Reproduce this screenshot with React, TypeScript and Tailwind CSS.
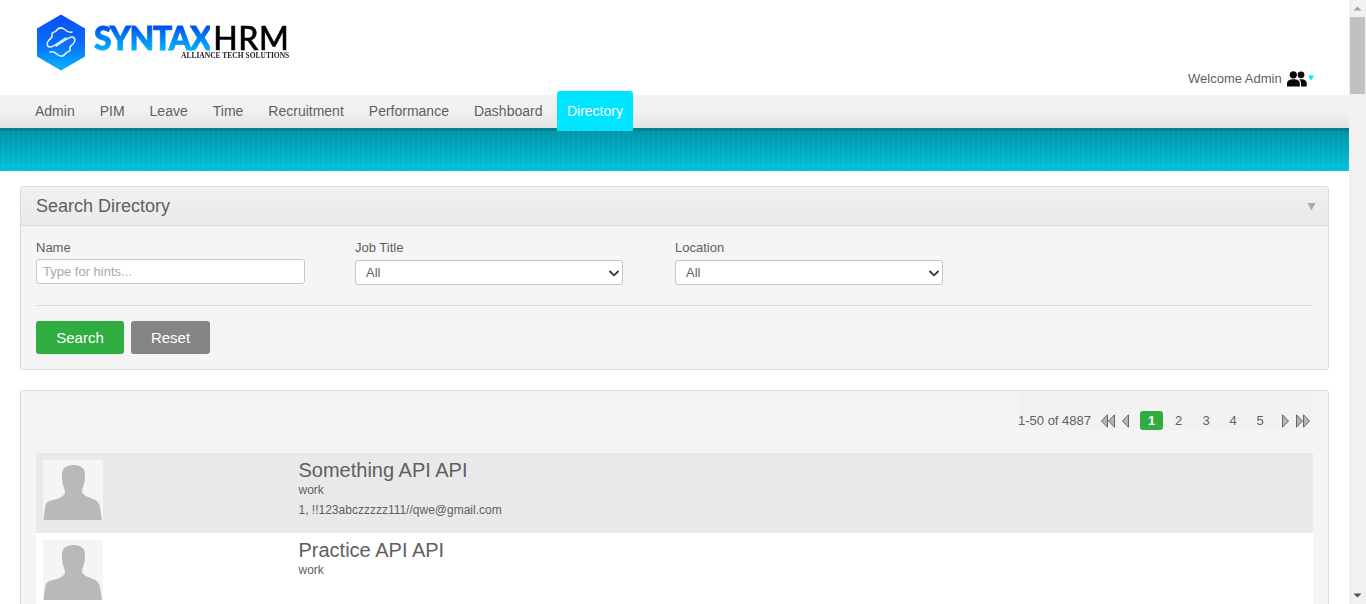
const font = "font-['Liberation_Sans',Arial,sans-serif]";

function HexLogo() {
  return (
    <svg width="50" height="57" viewBox="0 0 50 57" className="shrink-0">
      <defs>
        <linearGradient id="hexg" x1="0" y1="0" x2="0" y2="1">
          <stop offset="0" stopColor="#0a4cf5" />
          <stop offset="0.55" stopColor="#0a70fb" />
          <stop offset="1" stopColor="#03b6fb" />
        </linearGradient>
      </defs>
      <path d="M25 0.5 L49 14.5 V42.5 L25 56.5 L1 42.5 V14.5 Z" fill="url(#hexg)" />
      <g fill="none" stroke="#e6f2ff" strokeWidth="1.5" strokeLinecap="round" strokeLinejoin="round">
        <path d="M36 18 C32 19 30 17 28 15 C25 13 22 14 20 17 C18 19 15 18 16 21 C17 23 15 24 13 26 C10 29 11 33 14 33 C18 33 26 26 30 24" />
        <path d="M14 38 C18 37 20 39 22 41 C25 43 28 42 30 39 C32 37 35 38 34 35 C33 33 35 32 37 30 C40 27 39 23 36 23 C32 23 24 30 20 32" />
      </g>
    </svg>
  );
}

function Logo() {
  return (
    <div className="flex items-start pl-[36px] pt-[14px] blur-[0.4px]">
      <HexLogo />
      <div className="ml-[8px] mt-[11px] flex flex-col whitespace-nowrap">
        <div className="flex h-[26px] items-start font-['Lato',sans-serif] text-[32px] leading-[26px]">
          <span className="bg-gradient-to-b from-[#0a45f0] to-[#05b5fa] bg-clip-text font-black tracking-[-1.3px] text-transparent [-webkit-text-stroke:0.8px_transparent]">
            SYNTAX
          </span>
          <span className="ml-[3px] font-medium tracking-[0.5px] text-black [-webkit-text-stroke:0.5px_#000]">HRM</span>
        </div>
        <span className="ml-[87px] font-['Liberation_Serif',serif] text-[7.5px] font-bold leading-[9px] text-[#222]">
          ALLIANCE TECH SOLUTIONS
        </span>
      </div>
    </div>
  );
}

function Avatar() {
  return (
    <svg width="60" height="60" viewBox="0 0 60 60" className="shrink-0 bg-[#f5f5f5]">
      <path
        d="M30 5 C37 5 42 8 42 14 C42 18 42 21 41 24 C40 27 39 29 39 32 C40 35 45 37 50 39 C54 40 56 43 57 47 L59 60 H0.5 L2 48 C3 42 5 41 10 40 C15 39 20 37 22 33 C22 30 21 28 20 25 C19 22 19 18 19 14 C19 8 24 5 30 5 Z"
        fill="#b9b9b9"
      />
    </svg>
  );
}

function Tri({ dir, double }: { dir: "l" | "r"; double?: boolean }) {
  const one = (x: number, k: number) =>
    dir === "l" ? (
      <path key={k} d={`M${x + 6.5} 0.8 V13.2 L${x + 0.5} 7 Z`} fill="#b5b5b5" stroke="#666" strokeWidth="1" strokeLinejoin="round" />
    ) : (
      <path key={k} d={`M${x + 0.5} 0.8 V13.2 L${x + 6.5} 7 Z`} fill="#b5b5b5" stroke="#666" strokeWidth="1" strokeLinejoin="round" />
    );
  return (
    <svg width={double ? 15 : 9} height="14" viewBox={double ? "0 0 15 14" : "0 0 9 14"}>
      {double ? [one(0, 0), one(7, 1)] : one(1, 0)}
    </svg>
  );
}

const navItems = ["Admin", "PIM", "Leave", "Time", "Recruitment", "Performance", "Dashboard"];

function Row({ name, bg, lines }: { name: string; bg: string; lines: string[] }) {
  return (
    <div className={`flex h-[80px] items-start ${bg}`}>
      <div className="w-[262.5px] shrink-0 pl-[7px] pt-[7px]">
        <Avatar />
      </div>
      <div className="pt-[6px]">
        <div className="text-[20px] leading-[22px] text-[#5f5f5f]">{name}</div>
        <div className="mt-[2px] text-[12px] leading-[14px] text-[#5f5f5f]">{lines[0]}</div>
        {lines[1] && <div className="mt-[6px] text-[12px] leading-[14px] text-[#5f5f5f]">{lines[1]}</div>}
      </div>
    </div>
  );
}

function Field({ label, width, children }: { label: string; width: string; children: React.ReactNode }) {
  return (
    <div className={`${width} shrink-0`}>
      <div className="text-[13px] leading-[15px] text-[#5f5f5f]">{label}</div>
      {children}
    </div>
  );
}

function SelectBox() {
  return (
    <div className="mt-[5px] flex h-[25px] w-[268px] items-center justify-between rounded-[3px] border border-[#c4c4c4] bg-white pl-[10px] pr-[1px] text-[13px] text-[#5f5f5f]">
      <span>All</span>
      <svg width="14" height="14" viewBox="0 0 14 14">
        <path d="M2.5 5 L7 9.3 L11.5 5" fill="none" stroke="#333" strokeWidth="1.8" />
      </svg>
    </div>
  );
}

export default function App() {
  return (
    <div className={`flex h-[604px] w-[1366px] overflow-hidden bg-white ${font}`}>
      <div className="w-[1349px] shrink-0 overflow-hidden">
        <header className="relative h-[95px]">
          <Logo />
          <div className="absolute left-[1188px] top-[70px] flex items-center">
            <span className="text-[13px] leading-[18px] text-[#5f5f5f]">Welcome Admin</span>
            <svg width="20" height="16" viewBox="0 0 20 16" className="-mt-[1px] ml-[5px]">
              <circle cx="6.3" cy="3.8" r="3.6" fill="#0a0a0a" />
              <circle cx="14" cy="3.8" r="3.4" fill="#0a0a0a" />
              <path d="M0 15.5 V12.5 C0 9.5 3 8.2 6.5 8.2 C10 8.2 12.8 9.5 12.8 12.5 V15.5 Z" fill="#0a0a0a" />
              <path d="M14 15.5 V12.5 C14 10.8 13.4 9.6 12.3 8.6 C13 8.3 13.7 8.2 14.4 8.2 C17 8.2 19.8 9.5 19.8 12.5 V15.5 Z" fill="#0a0a0a" />
            </svg>
            <svg width="6" height="6" viewBox="0 0 6 6" className="mb-[3px] ml-px">
              <path d="M0 0.5 H6 L3 5.5 Z" fill="#00e5ff" />
            </svg>
          </div>
        </header>

        <nav className="relative z-10 flex h-[33px] bg-gradient-to-b from-[#f3f3f3] via-[#f1f1f1] to-[#e3e3e3] pl-[22.5px]">
          {navItems.map((n) => (
            <div key={n} className="flex h-[33px] items-center px-[12.5px] text-[14px] text-[#5f5f5f]">
              {n}
            </div>
          ))}
          <div className="-mt-[4px] ml-[2px] flex h-[40px] w-[76px] items-center justify-center rounded-t-[3px] bg-[#00e5ff] pt-px text-[14px] text-white">
            Directory
          </div>
        </nav>
        <div className="h-[43px] border-t-[3px] border-[#04808f] bg-[repeating-linear-gradient(to_right,rgba(0,60,80,0.035)_0px,rgba(0,60,80,0.035)_2px,rgba(255,255,255,0.015)_2px,rgba(255,255,255,0.015)_5px),linear-gradient(to_bottom,#0196a9,#00c4de)]" />

        <div className="px-[20px] pt-[15px]">
          <section className="h-[184px] rounded-[3px] border border-[#dcdcdc] bg-[#f5f5f5]">
            <div className="flex h-[39px] items-center justify-between border-b border-[#dcdcdc] bg-gradient-to-b from-[#f1f1f1] to-[#e9e9e9] pl-[15px] pr-[12px]">
              <span className="text-[18px] text-[#5f5f5f]">Search Directory</span>
              <svg width="9" height="9" viewBox="0 0 9 9">
                <path d="M0.5 1 H8.5 L4.5 8.5 Z" fill="#aaa" />
              </svg>
            </div>
            <div className="px-[15px] pt-[14px]">
              <div className="flex gap-[50px]">
                <Field label="Name" width="w-[269px]">
                  <div className="mt-[4px] flex h-[25px] items-center rounded-[3px] border border-[#c9c9c9] bg-white px-[6px] text-[13px] text-[#a9a9a9]">
                    Type for hints...
                  </div>
                </Field>
                <Field label="Job Title" width="w-[270px]">
                  <SelectBox />
                </Field>
                <Field label="Location" width="w-[268px]">
                  <SelectBox />
                </Field>
              </div>
              <div className="mt-[20px] border-t border-[#dcdcdc]" />
              <div className="mt-[15px] flex gap-[7px]">
                <div className="flex h-[33px] w-[88px] items-center justify-center rounded-[3px] bg-[#30ad40] pt-px text-[15px] text-white">Search</div>
                <div className="flex h-[33px] w-[79px] items-center justify-center rounded-[3px] bg-[#848484] pt-px text-[15px] text-white">Reset</div>
              </div>
            </div>
          </section>

          <section className="mt-[20px] rounded-[3px] border border-[#dcdcdc] bg-[#f5f5f5] px-[15px] pb-[20px]">
            <div className="ml-auto flex h-[39px] w-[295px] items-center bg-[#f2f2f2] pt-[20px] text-[13px] text-[#5f5f5f]">
              <span className="w-[83px] whitespace-nowrap">1-50 of 4887</span>
              <Tri dir="l" double />
              <span className="ml-[5px] flex"><Tri dir="l" /></span>
              <div className="ml-[10px] flex h-[19px] w-[23px] items-center justify-center rounded-[3px] bg-[#30ad40] font-bold text-white">1</div>
              <span className="flex w-[31px] justify-center">2</span>
              <span className="flex w-[24px] justify-center">3</span>
              <span className="flex w-[30px] justify-center">4</span>
              <span className="flex w-[24px] justify-center">5</span>
              <span className="ml-[9px] flex"><Tri dir="r" /></span>
              <span className="ml-[6px] flex"><Tri dir="r" double /></span>
            </div>
            <div className="mt-[23px]">
              <Row name="Something API API" bg="bg-[#e9e9e9]" lines={["work", "1, !!123abczzzzz111//qwe@gmail.com"]} />
              <Row name="Practice API API" bg="bg-white" lines={["work"]} />
            </div>
          </section>
        </div>
      </div>

      <div className="flex w-[17px] shrink-0 flex-col items-center bg-[#f1f1f1]">
        <svg width="17" height="17" viewBox="0 0 17 17">
          <path d="M4.5 10.5 L8.5 6.5 L12.5 10.5 Z" fill="#a3a3a3" />
        </svg>
        <div className="h-[77px] w-[15px] bg-[#c1c1c1]" />
        <div className="flex-1" />
        <svg width="17" height="17" viewBox="0 0 17 17">
          <path d="M4.5 6.5 L8.5 10.5 L12.5 6.5 Z" fill="#505050" />
        </svg>
      </div>
    </div>
  );
}
